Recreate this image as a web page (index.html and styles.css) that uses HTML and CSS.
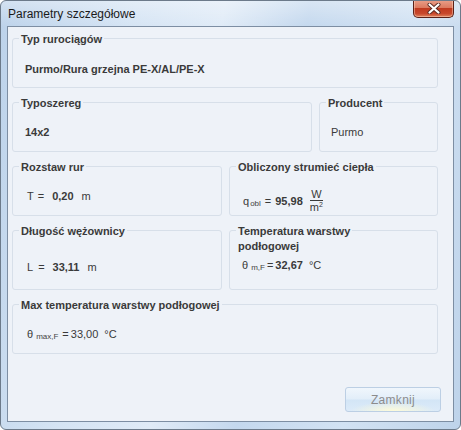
FILE: index.html
```html
<!DOCTYPE html>
<html lang="pl">
<head>
<meta charset="utf-8">
<title>Parametry szczegółowe</title>
<link rel="stylesheet" href="styles.css">
</head>
<body>
<div class="window">
  <div class="titlebar">
    <span class="title">Parametry szczegółowe</span>
    <button class="close" type="button" aria-label="Zamknij">
      <svg width="14" height="11" viewBox="0 0 14 11" aria-hidden="true">
        <path d="M2.5 1.5 L11.5 9.5 M11.5 1.5 L2.5 9.5" stroke="#5a2a22" stroke-width="4" stroke-linecap="round"/>
        <path d="M2.5 1.5 L11.5 9.5 M11.5 1.5 L2.5 9.5" stroke="#ffffff" stroke-width="2.2" stroke-linecap="round"/>
      </svg>
    </button>
  </div>
  <div class="client">
    <div class="groups">
      <section class="group h50">
        <div class="gtitle">Typ rurociągów</div>
        <div class="gval b first ml12">Purmo/Rura grzejna PE-X/AL/PE-X</div>
      </section>
      <div class="row row-a">
        <section class="group h50">
          <div class="gtitle">Typoszereg</div>
          <div class="gval b ml12">14x2</div>
        </section>
        <section class="group h50">
          <div class="gtitle">Producent</div>
          <div class="gval ml11">Purmo</div>
        </section>
      </div>
      <div class="row row-b">
        <section class="group h50">
          <div class="gtitle">Rozstaw rur</div>
          <div class="gval eq ml14">
            <span>T</span><span class="op op-t">=</span><b class="num n-t">0,20</b><span class="unit">m</span>
          </div>
        </section>
        <section class="group h50">
          <div class="gtitle">Obliczony strumieć ciepła</div>
          <div class="gval eq ml13">
            <span>q</span><span class="sub sub-q">obl</span><span class="op op-q">=</span><b class="num n-q">95,98</b>
            <span class="frac"><span class="fnum">W</span><span class="fden">m<sup>2</sup></span></span>
          </div>
        </section>
      </div>
      <div class="row row-b">
        <section class="group h60">
          <div class="gtitle">Długość wężownicy</div>
          <div class="gval eq ml14 low">
            <span>L</span><span class="op op-l">=</span><b class="num n-l">33,11</b><span class="unit">m</span>
          </div>
        </section>
        <section class="group h60">
          <div class="gtitle">Temperatura warstwy<br>podłogowej</div>
          <div class="gval eq ml12 tight">
            <span class="theta">θ</span><span class="sub sub-t">m,F</span><span class="op op-m">=</span><b class="num n-m">32,67</b><span class="deg">°C</span>
          </div>
        </section>
      </div>
      <section class="group h50">
        <div class="gtitle">Max temperatura warstwy podłogowej</div>
        <div class="gval eq ml14">
          <span class="theta">θ</span><span class="sub sub-t">max,F</span><span class="op op-x">=</span><span class="num-r n-x">33,00</span><span class="deg">°C</span>
        </div>
      </section>
    </div>
    <div class="footer">
      <button class="btn" type="button" disabled>Zamknij</button>
    </div>
  </div>
</div>
</body>
</html>
```

FILE: styles.css
```css
* { box-sizing: border-box; }
html, body { margin: 0; padding: 0; }
body {
  width: 461px;
  height: 430px;
  overflow: hidden;
  font-family: "Liberation Sans", Arial, sans-serif;
  background: #ffffff;
}
.window {
  width: 461px;
  height: 430px;
  border: 1px solid #6c7a8a;
  border-radius: 6px;
  background:
    linear-gradient(180deg, rgba(255,255,255,0.35) 0%, rgba(255,255,255,0) 6%),
    linear-gradient(100deg, #bcd2ea 0%, #d5e4f4 25%, #e0ebf7 42%, #c4d8ee 58%, #d2e2f3 78%, #bed3ea 100%);
  display: flex;
  flex-direction: column;
  overflow: hidden;
}
.titlebar {
  height: 25px;
  display: flex;
  justify-content: space-between;
  align-items: flex-start;
  padding-left: 7px;
}
.title {
  font-family: "Liberation Sans", Arial, sans-serif;
  font-size: 12px;
  line-height: 16px;
  padding-top: 5px;
  color: #1a1a1a;
}
.close {
  width: 41px;
  height: 18px;
  margin: -1px 6px 0 0;
  padding: 0;
  border: 1px solid #5b2118;
  border-top: none;
  border-radius: 0 0 5px 5px;
  background:
    linear-gradient(180deg, #eaa08a 0%, #dc7a60 45%, #c03a20 50%, #c8482c 80%, #e0845f 100%);
  box-shadow: inset 0 0 0 1px rgba(255,220,200,0.45);
  display: flex;
  align-items: center;
  justify-content: center;
}
.close svg { display: block; }
.client {
  margin: 0 0 0 6px;
  width: 447px;
  height: 396px;
  border: 1px solid #7d8ea3;
  background: #eef2f8;
  display: flex;
  flex-direction: column;
}
.groups {
  margin: 11px 0 0 4px;
  width: 426px;
  display: flex;
  flex-direction: column;
  gap: 14px;
}
.row { display: grid; gap: 7px; }
.row-a { grid-template-columns: 300px 119px; }
.row-b { grid-template-columns: 210px 209px; }
.group {
  border: 1px solid #d7dfe9;
  border-radius: 3px;
  color: #3a3a3a;
  font-size: 11px;
}
.h50 { height: 50px; }
.h60 { height: 60px; }
.gtitle {
  margin: -7px 0 0 6px;
  padding: 0 2px;
  width: fit-content;
  background: #eef2f8;
  font-weight: bold;
  line-height: 15px;
  color: #3a3a3a;
}
.gval {
  margin-top: 14px;
  line-height: 14px;
  white-space: nowrap;
}
.gval.first { margin-top: 15px; }
.gval.low { margin-top: 21px; }
.gval.tight { margin-top: 4px; }
.b { font-weight: bold; }
.ml11 { margin-left: 11px; }
.ml12 { margin-left: 12px; }
.ml13 { margin-left: 13px; }
.ml14 { margin-left: 14px; }
.eq {
  display: flex;
  align-items: center;
}
.num { font-weight: bold; }
.op-t { margin-left: 4px; }
.n-t { margin-left: 8px; }
.op-l { margin-left: 5px; }
.n-l { margin-left: 8px; }
.unit { margin-left: 8px; }
.sub {
  font-size: 8px;
  line-height: 8px;
  position: relative;
  top: 3px;
  color: #444;
}
.sub-q { margin-left: 1px; }
.op-q { margin-left: 4px; }
.n-q { margin-left: 4px; }
.frac {
  display: inline-flex;
  flex-direction: column;
  align-items: center;
  margin-left: 6px;
  font-size: 11px;
  line-height: 10px;
}
.fnum {
  padding: 0 1px 1px;
  border-bottom: 1px solid #3a3a3a;
}
.fden { padding: 1px 1px 0; }
.fden sup { font-size: 7px; vertical-align: 4px; line-height: 0; }
.theta { font-size: 11px; }
.sub-t { margin-left: 3px; }
.op-m { margin-left: 2px; }
.n-m { margin-left: 2px; }
.op-x { margin-left: 4px; }
.n-x { margin-left: 2px; }
.deg { margin-left: 6px; }
.footer {
  margin-top: 33px;
  display: flex;
  justify-content: flex-end;
  padding-right: 12px;
}
.btn {
  width: 96px;
  height: 25px;
  border: 1px solid #bccfe4;
  border-radius: 3px;
  background:
    radial-gradient(ellipse 45% 40% at 50% 100%, rgba(255,252,215,0.95), rgba(255,252,215,0) 100%),
    linear-gradient(180deg, #f0f6fc 0%, #e2eef9 48%, #d3e5f6 52%, #dcebf9 100%);
  font-family: "Liberation Sans", Arial, sans-serif;
  font-size: 12px;
  letter-spacing: 0.3px;
  color: #8c8c8c;
  padding: 0;
}
```
